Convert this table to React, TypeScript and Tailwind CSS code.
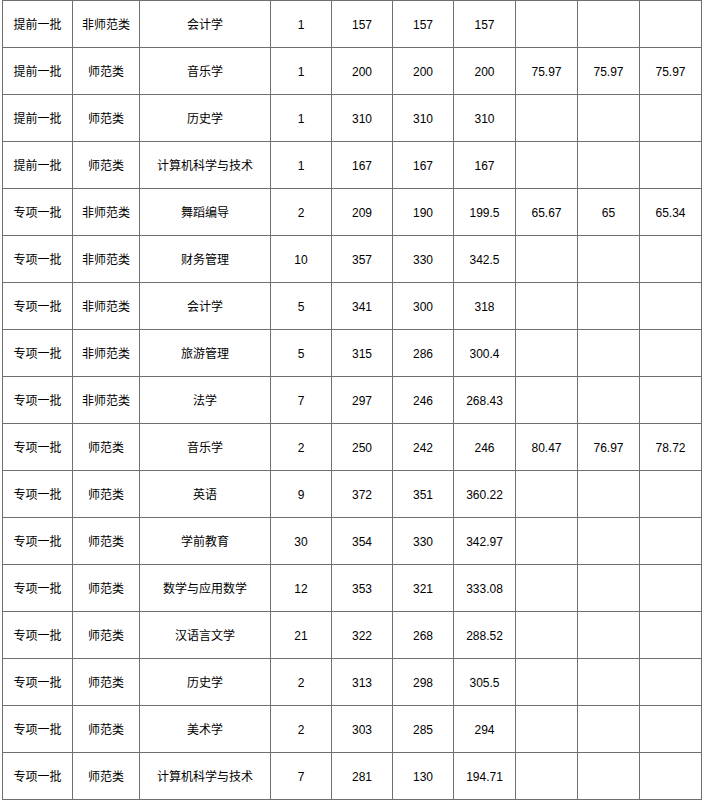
const ROWS: string[][] = [
  ["提前一批", "非师范类", "会计学", "1", "157", "157", "157", "", "", ""],
  ["提前一批", "师范类", "音乐学", "1", "200", "200", "200", "75.97", "75.97", "75.97"],
  ["提前一批", "师范类", "历史学", "1", "310", "310", "310", "", "", ""],
  ["提前一批", "师范类", "计算机科学与技术", "1", "167", "167", "167", "", "", ""],
  ["专项一批", "非师范类", "舞蹈编导", "2", "209", "190", "199.5", "65.67", "65", "65.34"],
  ["专项一批", "非师范类", "财务管理", "10", "357", "330", "342.5", "", "", ""],
  ["专项一批", "非师范类", "会计学", "5", "341", "300", "318", "", "", ""],
  ["专项一批", "非师范类", "旅游管理", "5", "315", "286", "300.4", "", "", ""],
  ["专项一批", "非师范类", "法学", "7", "297", "246", "268.43", "", "", ""],
  ["专项一批", "师范类", "音乐学", "2", "250", "242", "246", "80.47", "76.97", "78.72"],
  ["专项一批", "师范类", "英语", "9", "372", "351", "360.22", "", "", ""],
  ["专项一批", "师范类", "学前教育", "30", "354", "330", "342.97", "", "", ""],
  ["专项一批", "师范类", "数学与应用数学", "12", "353", "321", "333.08", "", "", ""],
  ["专项一批", "师范类", "汉语言文学", "21", "322", "268", "288.52", "", "", ""],
  ["专项一批", "师范类", "历史学", "2", "313", "298", "305.5", "", "", ""],
  ["专项一批", "师范类", "美术学", "2", "303", "285", "294", "", "", ""],
  ["专项一批", "师范类", "计算机科学与技术", "7", "281", "130", "194.71", "", "", ""],
];

export default function App() {
  return (
    <div className="min-h-screen bg-white">
      <div
        className="ml-[2px] inline-grid grid-cols-[69px_66px_130px_60px_60px_60px_61px_61px_61px_61px] auto-rows-[46px] gap-px border border-[#6f6f6f] bg-[#6f6f6f] text-[12px] text-black"
        style={{ fontFamily: '"Liberation Sans", "Noto Sans CJK SC", sans-serif' }}
      >
        {ROWS.map((row, r) =>
          row.map((cell, c) => (
            <div key={`${r}-${c}`} className="flex items-center justify-center bg-white pt-[2px] whitespace-nowrap">
              {cell}
            </div>
          ))
        )}
      </div>
    </div>
  );
}
